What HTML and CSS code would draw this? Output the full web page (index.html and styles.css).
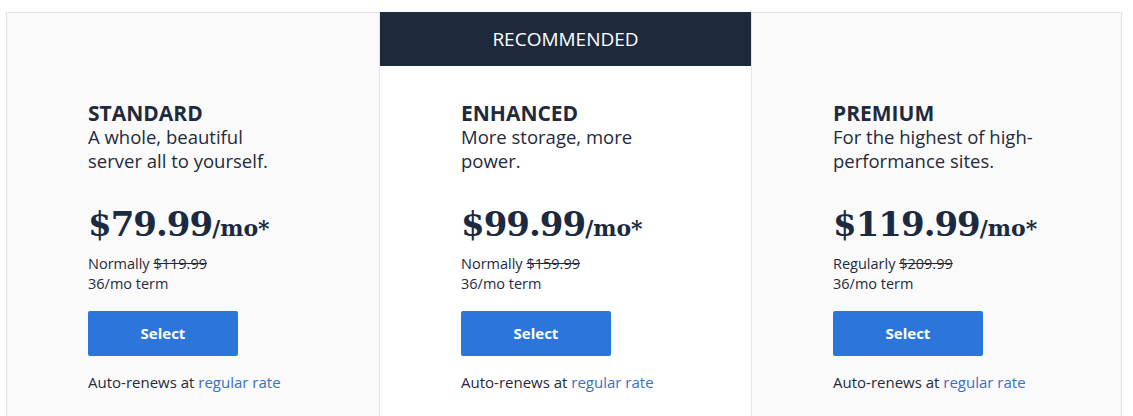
FILE: index.html
```html
<!doctype html>
<html lang="en">
<head>
    <meta charset="UTF-8">
    <title>Plans</title>
    <link rel="stylesheet" href="styles.css">
</head>
<body>
<div class="plans">
    <div class="plan">
        <div class="flag"></div>
        <div class="body">
            <h2>STANDARD</h2>
            <p class="desc">A whole, beautiful<br>server all to yourself.</p>
            <p class="price">$79.99<span>/mo*</span></p>
            <p class="note">Normally <s>$119.99</s><br>36/mo term</p>
            <a class="btn" href="#">Select</a>
            <p class="renew">Auto-renews at <a href="#">regular rate</a></p>
        </div>
    </div>
    <div class="plan best">
        <div class="flag">RECOMMENDED</div>
        <div class="body">
            <h2>ENHANCED</h2>
            <p class="desc">More storage, more<br>power.</p>
            <p class="price">$99.99<span>/mo*</span></p>
            <p class="note">Normally <s>$159.99</s><br>36/mo term</p>
            <a class="btn" href="#">Select</a>
            <p class="renew">Auto-renews at <a href="#">regular rate</a></p>
        </div>
    </div>
    <div class="plan last">
        <div class="flag"></div>
        <div class="body">
            <h2>PREMIUM</h2>
            <p class="desc">For the highest of high-<br>performance sites.</p>
            <p class="price">$119.99<span>/mo*</span></p>
            <p class="note">Regularly <s>$209.99</s><br>36/mo term</p>
            <a class="btn" href="#">Select</a>
            <p class="renew">Auto-renews at <a href="#">regular rate</a></p>
        </div>
    </div>
</div>
</body>
</html>
```

FILE: styles.css
```css
*{margin:0;padding:0;box-sizing:border-box;}
html,body{background:#fff;font-family:"Open Sans","Liberation Sans",sans-serif;color:#1f2a3c;}
.plans{
    display:grid;
    grid-template-columns:374px 371px 371px;
    width:1116px;
    margin:12px 0 0 6px;
}
.plan{
    background:#fafafa;
    height:404px;
    border:1px solid #e4e4e4;
    border-bottom:none;
}
.plan.best{
    background:#fff;
    border:none;
}
.flag{
    height:53px;
}
.best .flag{
    height:54px;
    background:#1e2a3b;
    color:#fff;
    font-size:19px;
    line-height:54px;
    text-align:center;
}
.body{
    padding:35px 0 0 81px;
}
.best .body{
    padding-top:35px;
}
.last .body{
    padding-left:81px;
}
h2{
    font-size:21px;
    font-weight:700;
    line-height:24px;
}
.desc{
    font-size:18.5px;
    line-height:24px;
}
.price{
    margin-top:26px;
    font-family:"DejaVu Serif",serif;
    font-weight:700;
    font-size:34px;
    line-height:50px;
    letter-spacing:-1px;
    color:#1b2a40;
}
.price span{
    font-size:22px;
    letter-spacing:0;
}
.note{
    margin-top:1px;
    font-size:14.5px;
    line-height:20px;
}
.btn{
    display:block;
    width:150px;
    height:45px;
    margin-top:17px;
    background:#2c76db;
    border-radius:2px;
    color:#fff;
    font-size:15px;
    font-weight:700;
    line-height:45px;
    text-align:center;
    text-decoration:none;
}
.renew{
    margin-top:15px;
    font-size:15px;
    line-height:22px;
}
.renew a{
    color:#3b6fc2;
    text-decoration:none;
}
```
